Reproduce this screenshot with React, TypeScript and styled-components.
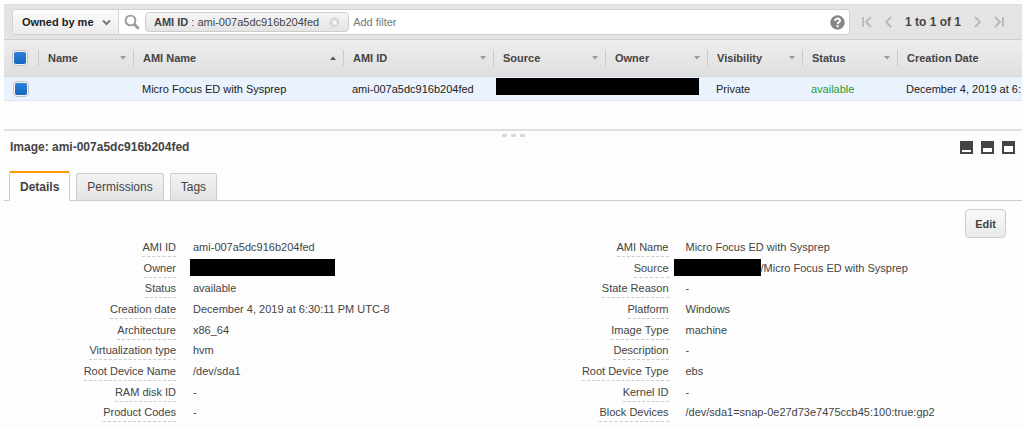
import React from "react";
import styled, { createGlobalStyle } from "styled-components";

const GlobalStyle = createGlobalStyle`
  * { box-sizing: border-box; }
  body {
    margin: 0;
    background: #fdfdfd;
    color: #444;
    font-family: "Liberation Sans", Arial, sans-serif;
    font-size: 11px;
    line-height: 14px;
  }
  button, input, select { font: inherit; color: inherit; margin: 0; }
`;

const Page = styled.main`
  padding: 4px 2px 0 4px;
`;

const Toolbar = styled.div`
  display: flex;
  align-items: center;
  height: 36px;
  padding: 0 18px 0 8px;
  background: #e4e4e4;
  border-top: 1px solid #dcdcdc;
  border-bottom: 1px solid #cfcfcf;
`;

const FilterBar = styled.div`
  display: flex;
  align-items: center;
  flex: 1;
  min-width: 0;
  height: 26px;
  background: #fff;
  border: 1px solid #d2d2d2;
  border-radius: 3px;
`;

const OwnerPicker = styled.label`
  display: grid;
  align-self: stretch;
  grid-template-columns: 1fr 24px;
  width: 106px;
  align-items: center;
  background: linear-gradient(#fcfcfc, #ebebeb);
  border-right: 1px solid #d2d2d2;
  border-radius: 3px 0 0 3px;

  svg { grid-area: 1 / 2; pointer-events: none; margin-left: 8px; }
`;

const OwnerSelect = styled.select`
  grid-area: 1 / 1 / 2 / 3;
  appearance: none;
  width: 100%;
  height: 24px;
  padding: 0 0 0 9px;
  border: 0;
  background: transparent;
  color: #222;
  font-weight: bold;
`;

const SearchIcon = styled.svg`
  flex: none;
  margin: 0 5px 0 5px;
`;

const Chip = styled.span`
  display: flex;
  align-items: center;
  flex: none;
  height: 20px;
  padding: 0 8px;
  background: linear-gradient(#f6f6f6, #e4e4e4);
  border: 1px solid #ccc;
  border-radius: 4px;
  white-space: pre;
`;

const IconButton = styled.button`
  display: flex;
  flex: none;
  padding: 0;
  border: 0;
  background: none;
`;

const ChipClose = styled(IconButton)`
  margin-left: 10px;
`;

const FilterInput = styled.input`
  flex: 1;
  min-width: 0;
  height: 24px;
  padding: 0 4px;
  border: 0;
  background: transparent;
  &::placeholder { color: #777; opacity: 1; }
`;

const HelpButton = styled(IconButton)`
  margin-right: 4px;
`;

const Pager = styled.nav`
  display: flex;
  align-items: center;
  gap: 13px;
  margin-left: 12px;
  color: #444;
  font-size: 12px;
  font-weight: bold;
`;

const Table = styled.table`
  width: 100%;
  table-layout: fixed;
  border-collapse: separate;
  border-spacing: 0;
`;

const Col = styled.col<{ $width?: number }>`
  width: ${(p) => (p.$width ? `${p.$width}px` : "auto")};
`;

const HeadRow = styled.tr`
  height: 37px;
  background: linear-gradient(#eeeeee, #dedede);
`;

const HeadCell = styled.th`
  padding: 0;
  border-bottom: 1px solid #d4dbe0;
  text-align: left;
`;

const HeadLabel = styled.div<{ $first?: boolean }>`
  display: flex;
  align-items: center;
  justify-content: space-between;
  height: 16px;
  padding: 0 7px 0 ${(p) => (p.$first ? 7 : 9)}px;
  border-left: 1px solid ${(p) => (p.$first ? "transparent" : "#cacaca")};
  white-space: nowrap;
`;

const BodyRow = styled.tr`
  height: 24px;
  background: #eaf2fd;
  color: #222;
`;

const BodyCell = styled.td<{ $tone?: string; $pad?: number }>`
  padding: 0 0 0 ${(p) => p.$pad ?? 9}px;
  border-bottom: 1px solid #dde6ee;
  color: ${(p) => p.$tone ?? "inherit"};
  white-space: nowrap;
  overflow: hidden;
`;

const Check = styled.input`
  display: block;
  appearance: none;
  width: 16px;
  height: 16px;
  padding: 1px;
  border: 1px solid #c4c4c4;
  border-radius: 4px;
  background: #fff;
  &:checked {
    background: linear-gradient(#2b80d8, #1766bd) content-box, #f4f4f4;
  }
`;

const Redacted = styled.span<{ $width: number; $pull?: number }>`
  display: block;
  flex: none;
  width: ${(p) => p.$width}px;
  height: 17px;
  margin-left: -${(p) => p.$pull ?? 0}px;
  background: #000;
`;

const CellRedacted = styled(Redacted)`
  margin-bottom: 5px;
`;

const Splitter = styled.div`
  display: flex;
  justify-content: center;
  gap: 4px;
  margin-top: 28px;
  padding-top: 3px;
  border-top: 2px solid #e0e0e0;
`;

const Grip = styled.i`
  width: 5px;
  height: 3px;
  border-radius: 1px;
  background: #d6d6d6;
`;

const PanelHead = styled.header`
  display: flex;
  align-items: center;
  justify-content: space-between;
  height: 20px;
  padding: 0 7px 0 6px;
`;

const Title = styled.h1`
  margin: 0;
  font-size: 12px;
  line-height: 16px;
`;

const WindowButtons = styled.div`
  display: flex;
  gap: 8px;
`;

const Tabs = styled.div`
  display: flex;
  align-items: flex-end;
  gap: 6px;
  height: 44px;
  padding-left: 5px;
  border-bottom: 1px solid #ccc;
`;

const Tab = styled.button<{ $active?: boolean }>`
  height: ${(p) => (p.$active ? 30 : 28)}px;
  margin-bottom: -1px;
  padding: 0 10px;
  border: 1px solid #ccc;
  border-top: ${(p) => (p.$active ? "2px solid #f90" : "1px solid #ccc")};
  border-bottom-color: ${(p) => (p.$active ? "#fdfdfd" : "#ccc")};
  border-radius: 2px 2px 0 0;
  background: ${(p) => (p.$active ? "#fdfdfd" : "linear-gradient(#f3f3f3, #e2e2e2)")};
  font-size: 12px;
  font-weight: ${(p) => (p.$active ? "bold" : "normal")};
`;

const Actions = styled.div`
  display: flex;
  justify-content: flex-end;
  padding: 8px 16px 0 0;
`;

const EditButton = styled.button`
  height: 29px;
  padding: 0 9px;
  border: 1px solid #ccc;
  border-radius: 4px;
  background: linear-gradient(#fafafa, #e9e9e9);
  font-weight: bold;
`;

const Details = styled.div`
  display: grid;
  grid-template-columns: 1fr 1fr;
  padding: 2px 33px 0 0;
`;

const List = styled.dl`
  display: grid;
  grid-auto-rows: 1fr;
  min-height: 186px;
  margin: 0;
`;

const Item = styled.div`
  display: grid;
  grid-template-columns: 172px 1fr;
  column-gap: 17px;
  align-items: start;
  height: 20px;
`;

const Term = styled.dt`
  justify-self: end;
  padding-bottom: 2px;
  border-bottom: 1px dashed #ccc;
`;

const Value = styled.dd`
  display: flex;
  align-items: center;
  height: 14px;
  margin: 0;
  line-height: 14px;
  white-space: nowrap;
`;

const PagerIcon = ({ d, width, label }: { d: string; width: number; label: string }) => (
  <IconButton aria-label={label}>
    <svg width={width} height="12" viewBox={`0 0 ${width} 12`} fill="none" stroke="#b8b8b8" strokeWidth="1.8">
      <path d={d} />
    </svg>
  </IconButton>
);

const SortArrow = ({ up }: { up?: boolean }) => (
  <svg width="6" height="4" viewBox="0 0 6 4" aria-hidden="true">
    <path d={up ? "M0 4 3 0.5 6 4Z" : "M0 0 3 3.5 6 0Z"} fill={up ? "#555" : "#999"} />
  </svg>
);

const WindowIcon = ({ top, height, label }: { top: number; height: number; label: string }) => (
  <IconButton aria-label={label}>
    <svg width="13" height="13" viewBox="0 0 13 13">
      <rect width="13" height="13" fill="#444" />
      <rect x="2" y={top} width="9" height={height} fill="#fff" />
    </svg>
  </IconButton>
);

const columns = [
  { name: "Name", width: 95 },
  { name: "AMI Name", width: 210, up: true },
  { name: "AMI ID", width: 150 },
  { name: "Source", width: 112 },
  { name: "Owner", width: 102 },
  { name: "Visibility", width: 95 },
  { name: "Status", width: 95 },
  { name: "Creation Date" },
];

const leftItems: [string, React.ReactNode][] = [
  ["AMI ID", "ami-007a5dc916b204fed"],
  ["Owner", <Redacted $width={145} $pull={3} />],
  ["Status", "available"],
  ["Creation date", "December 4, 2019 at 6:30:11 PM UTC-8"],
  ["Architecture", "x86_64"],
  ["Virtualization type", "hvm"],
  ["Root Device Name", "/dev/sda1"],
  ["RAM disk ID", "-"],
  ["Product Codes", "-"],
];

const rightItems: [string, React.ReactNode][] = [
  ["AMI Name", "Micro Focus ED with Sysprep"],
  ["Source", <><Redacted $width={87} $pull={12} />/Micro Focus ED with Sysprep</>],
  ["State Reason", "-"],
  ["Platform", "Windows"],
  ["Image Type", "machine"],
  ["Description", "-"],
  ["Root Device Type", "ebs"],
  ["Kernel ID", "-"],
  ["Block Devices", "/dev/sda1=snap-0e27d73e7475ccb45:100:true:gp2"],
];

const DetailList = ({ items }: { items: [string, React.ReactNode][] }) => (
  <List>
    {items.map(([term, value]) => (
      <Item key={term}>
        <Term>{term}</Term>
        <Value>{value}</Value>
      </Item>
    ))}
  </List>
);

export default function App() {
  return (
    <>
      <GlobalStyle />
      <Page>
        <Toolbar>
          <FilterBar>
            <OwnerPicker>
              <OwnerSelect aria-label="Ownership">
                <option>Owned by me</option>
              </OwnerSelect>
              <svg width="9" height="7" viewBox="0 0 9 7" fill="none" stroke="#777" strokeWidth="2">
                <path d="M1 1.5 4.5 5 8 1.5" />
              </svg>
            </OwnerPicker>
            <SearchIcon width="16" height="16" viewBox="0 0 16 16" fill="none" stroke="#999">
              <circle cx="6.5" cy="6.5" r="4.9" strokeWidth="1.9" />
              <path d="M10.2 10.2 14.8 14.8" strokeWidth="2.8" />
            </SearchIcon>
            <Chip>
              <b>AMI ID</b> : ami-007a5dc916b204fed
              <ChipClose aria-label="Remove filter">
                <svg width="11" height="11" viewBox="0 0 11 11">
                  <circle cx="5.5" cy="5.5" r="5" fill="#d6d6d6" />
                  <path d="M3.5 3.5 7.5 7.5M7.5 3.5 3.5 7.5" stroke="#fff" strokeWidth="1.5" />
                </svg>
              </ChipClose>
            </Chip>
            <FilterInput aria-label="Add filter" placeholder="Add filter" />
            <HelpButton aria-label="Help">
              <svg width="15" height="15" viewBox="0 0 15 15" fill="none">
                <circle cx="7.5" cy="7.5" r="7.2" fill="#858585" />
                <path d="M5 6C5 2.8 10 2.8 10 5.8 10 7.4 7.6 7.3 7.6 9.2" stroke="#fff" strokeWidth="1.9" />
                <rect x="6.6" y="10.2" width="2" height="2" fill="#fff" />
              </svg>
            </HelpButton>
          </FilterBar>
          <Pager aria-label="Pages">
            <PagerIcon label="First page" width={10} d="M1 1V11M9 1 4 6 9 11" />
            <PagerIcon label="Previous page" width={7} d="M6 1 1 6 6 11" />
            <span>1 to 1 of 1</span>
            <PagerIcon label="Next page" width={7} d="M1 1 6 6 1 11" />
            <PagerIcon label="Last page" width={10} d="M1 1 6 6 1 11M9 1V11" />
          </Pager>
        </Toolbar>

        <Table>
          <colgroup>
            <Col $width={34} />
            {columns.map((c) => (
              <Col key={c.name} $width={c.width} />
            ))}
          </colgroup>
          <thead>
            <HeadRow>
              <HeadCell>
                <HeadLabel $first>
                  <Check type="checkbox" defaultChecked aria-label="Select all" />
                </HeadLabel>
              </HeadCell>
              {columns.map((c) => (
                <HeadCell key={c.name}>
                  <HeadLabel>
                    {c.name}
                    {c.width && <SortArrow up={c.up} />}
                  </HeadLabel>
                </HeadCell>
              ))}
            </HeadRow>
          </thead>
          <tbody>
            <BodyRow>
              <BodyCell>
                <Check type="checkbox" defaultChecked aria-label="Select image" />
              </BodyCell>
              <BodyCell />
              <BodyCell>Micro Focus ED with Sysprep</BodyCell>
              <BodyCell>ami-007a5dc916b204fed</BodyCell>
              <BodyCell colSpan={2} $pad={3}>
                <CellRedacted $width={203} />
              </BodyCell>
              <BodyCell>Private</BodyCell>
              <BodyCell $tone="#1f9d3a">available</BodyCell>
              <BodyCell>December 4, 2019 at 6:</BodyCell>
            </BodyRow>
          </tbody>
        </Table>

        <Splitter>
          <Grip />
          <Grip />
          <Grip />
        </Splitter>

        <PanelHead>
          <Title>Image: ami-007a5dc916b204fed</Title>
          <WindowButtons>
            <WindowIcon label="Collapse panel" top={9} height={2} />
            <WindowIcon label="Split panel" top={7} height={4} />
            <WindowIcon label="Expand panel" top={5} height={6} />
          </WindowButtons>
        </PanelHead>

        <Tabs role="tablist">
          <Tab role="tab" aria-selected="true" $active>Details</Tab>
          <Tab role="tab" aria-selected="false">Permissions</Tab>
          <Tab role="tab" aria-selected="false">Tags</Tab>
        </Tabs>

        <Actions>
          <EditButton>Edit</EditButton>
        </Actions>

        <Details>
          <DetailList items={leftItems} />
          <DetailList items={rightItems} />
        </Details>
      </Page>
    </>
  );
}
